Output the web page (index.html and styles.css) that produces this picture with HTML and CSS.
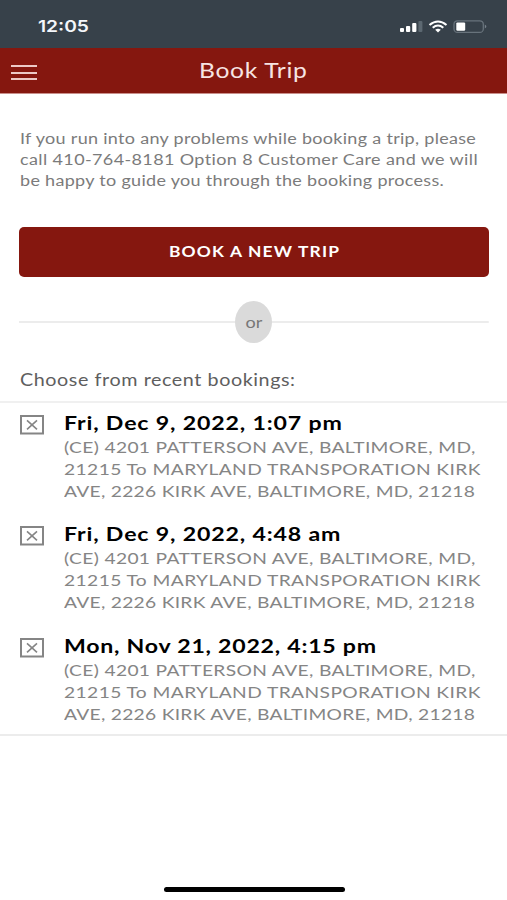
FILE: index.html
```html
<!DOCTYPE html>
<html lang="en">
<head>
<meta charset="utf-8">
<title>Book Trip</title>
<link rel="stylesheet" href="styles.css">
</head>
<body>
<div class="status">
  <span class="t time">12:05</span>
  <svg class="status-icons" width="88" height="16" viewBox="0 0 88 16">
    <g fill="#fff"><rect x="0" y="9" width="4" height="4" rx="1"/><rect x="6" y="7" width="4.200" height="6" rx="1"/><rect x="12.200" y="4" width="4.200" height="9" rx="1"/><rect x="18.400" y="2" width="4" height="11" rx="1" fill="#5c6871"/></g>
    <g fill="none" stroke="#fff" stroke-width="2.100"><path d="M29.500 6Q38 -1 46.500 6"/><path d="M32.700 8.700Q38 4.300 43.300 8.700"/></g>
    <path d="M35.200 10.800Q38 8.800 40.800 10.800L38 13.400Z" fill="#fff"/>
    <rect x="54" y="1.800" width="29.300" height="11.600" rx="3.500" fill="none" stroke="#68737c" stroke-width="1.300"/>
    <rect x="56.300" y="3.400" width="8.900" height="8.400" rx="1.200" fill="#fff"/>
    <path d="M84.800 5.600Q88 7.600 84.800 9.600Z" fill="#77818a"/>
  </svg>
</div>
<header class="bar">
  <div class="menu"><i></i><i></i><i></i></div>
  <h1><span class="t title">Book Trip</span></h1>
</header>
<main>
  <p class="intro">
    <span class="t i1">If you run into any problems while booking a trip, please</span>
    <span class="t i2">call 410-764-8181 Option 8 Customer Care and we will</span>
    <span class="t i3">be happy to guide you through the booking process.</span>
  </p>
  <div class="button"><span class="t label">BOOK A NEW TRIP</span></div>
  <div class="divider"><span class="or"><span class="t">or</span></span></div>
  <h2><span class="t choose">Choose from recent bookings:</span></h2>
</main>
<ul class="trips">
  <li>
    <svg class="box" width="24" height="20" viewBox="0 0 24 20"><rect x="1" y="1" width="22" height="17.500"/><path d="M7 5.300L17 14.300M17 5.300L7 14.300"/></svg>
    <div class="trip">
      <span class="t date d1">Fri, Dec 9, 2022, 1:07 pm</span>
      <span class="t a1">(CE) 4201 PATTERSON AVE, BALTIMORE, MD,</span>
      <span class="t a2">21215 To MARYLAND TRANSPORATION KIRK</span>
      <span class="t a3">AVE, 2226 KIRK AVE, BALTIMORE, MD, 21218</span>
    </div>
  </li>
  <li>
    <svg class="box" width="24" height="20" viewBox="0 0 24 20"><rect x="1" y="1" width="22" height="17.500"/><path d="M7 5.300L17 14.300M17 5.300L7 14.300"/></svg>
    <div class="trip">
      <span class="t date d2">Fri, Dec 9, 2022, 4:48 am</span>
      <span class="t a1">(CE) 4201 PATTERSON AVE, BALTIMORE, MD,</span>
      <span class="t a2">21215 To MARYLAND TRANSPORATION KIRK</span>
      <span class="t a3">AVE, 2226 KIRK AVE, BALTIMORE, MD, 21218</span>
    </div>
  </li>
  <li>
    <svg class="box" width="24" height="20" viewBox="0 0 24 20"><rect x="1" y="1" width="22" height="17.500"/><path d="M7 5.300L17 14.300M17 5.300L7 14.300"/></svg>
    <div class="trip">
      <span class="t date d3">Mon, Nov 21, 2022, 4:15 pm</span>
      <span class="t a1">(CE) 4201 PATTERSON AVE, BALTIMORE, MD,</span>
      <span class="t a2">21215 To MARYLAND TRANSPORATION KIRK</span>
      <span class="t a3">AVE, 2226 KIRK AVE, BALTIMORE, MD, 21218</span>
    </div>
  </li>
</ul>
<div class="home"><i></i></div>
</body>
</html>
```
FILE: styles.css
```css
* { box-sizing: border-box; }
body { margin: 0; width: 507px; height: 900px; overflow: hidden; display: flex; flex-direction: column; background: #fff; color: #777; font-family: Lato, "Noto Sans", sans-serif; }
h1, h2, p, ul { margin: 0; padding: 0; font-weight: 400; list-style: none; }

/* Wide letterforms: each line is stretched horizontally from its left edge */
.t { display: block; width: max-content; white-space: nowrap; transform: scaleX(1.2); transform-origin: left; }
.title { letter-spacing: 0.6px; }
.intro .t { transform: scaleX(1.16); }
.i1 { letter-spacing: 0.26px; }
.i2 { letter-spacing: 0.33px; }
.i3 { letter-spacing: 0.27px; }
.label { letter-spacing: 0.97px; }
.choose { transform: scaleX(1.16); letter-spacing: 0.5px; }
.a1 { letter-spacing: 0.29px; }
.a2 { letter-spacing: 0.34px; }
.a3 { letter-spacing: 0.24px; }

.status { flex: none; height: 48px; padding: 16px 19px 0 38px; display: flex; justify-content: space-between; background: #37414a; }
.time { color: #f4f6fa; font: 600 16px/20px Inter, sans-serif; }
.status-icons { margin-top: 3px; }
.bar { flex: none; height: 46px; display: flex; background: #85170f; border-bottom: 1px solid #c98f8b; }
.menu { width: 26px; margin: 17px 0 0 11px; display: flex; flex-direction: column; gap: 4.500px; }
.menu i { height: 2px; background: #edc9c6; }
h1 { margin-left: 162px; padding-top: 10px; font-size: 20.500px; line-height: 25px; color: #f7e4e2; }
main { flex: none; height: 307px; padding: 34px 18.500px 0 19px; }
.intro { padding-left: 0.500px; font-size: 15.500px; line-height: 21.200px; color: #7b7b7b; }
.button { height: 50.500px; margin-top: 34.900px; border-radius: 5px; display: flex; padding: 0 0 0 149.500px; align-items: center; background: #85170f; color: #fff; font-size: 14.500px; font-weight: 700; }
.divider { height: 42px; margin-top: 24px; display: flex; align-items: center; justify-content: center; background: linear-gradient(#ececec, #ececec) center / 100% 2px no-repeat; }
.or { width: 37px; height: 42px; border-radius: 50%; background: #dadada; display: flex; align-items: center; justify-content: center; font-size: 15px; }
.or .t { transform-origin: center; }
h2 { margin-top: 25px; padding-left: 0.700px; font-size: 17px; line-height: 24px; color: #5e5e5e; }
.trips { flex: none; height: 335px; border-top: 2px solid #f0f0f0; border-bottom: 2px solid #ececec; padding-top: 8px; }
.trips li { height: 111.300px; display: flex; padding-left: 20px; }
.box { margin: 4px 20px 0 0; fill: none; stroke: #858585; stroke-width: 2; }
.box path { stroke-width: 1.600; }
.trip { font-size: 16px; line-height: 22px; color: #858585; }
.date { margin-bottom: 1px; font-size: 18.500px; line-height: 24px; font-weight: 700; color: #000; transform: scaleX(1.25); letter-spacing: 0.67px; }
.d3 { letter-spacing: 0.6px; }
.home { margin-top: auto; padding: 0 0 8px 1px; display: flex; justify-content: center; }
.home i { width: 181px; height: 5px; border-radius: 3px; background: #000; }
```
